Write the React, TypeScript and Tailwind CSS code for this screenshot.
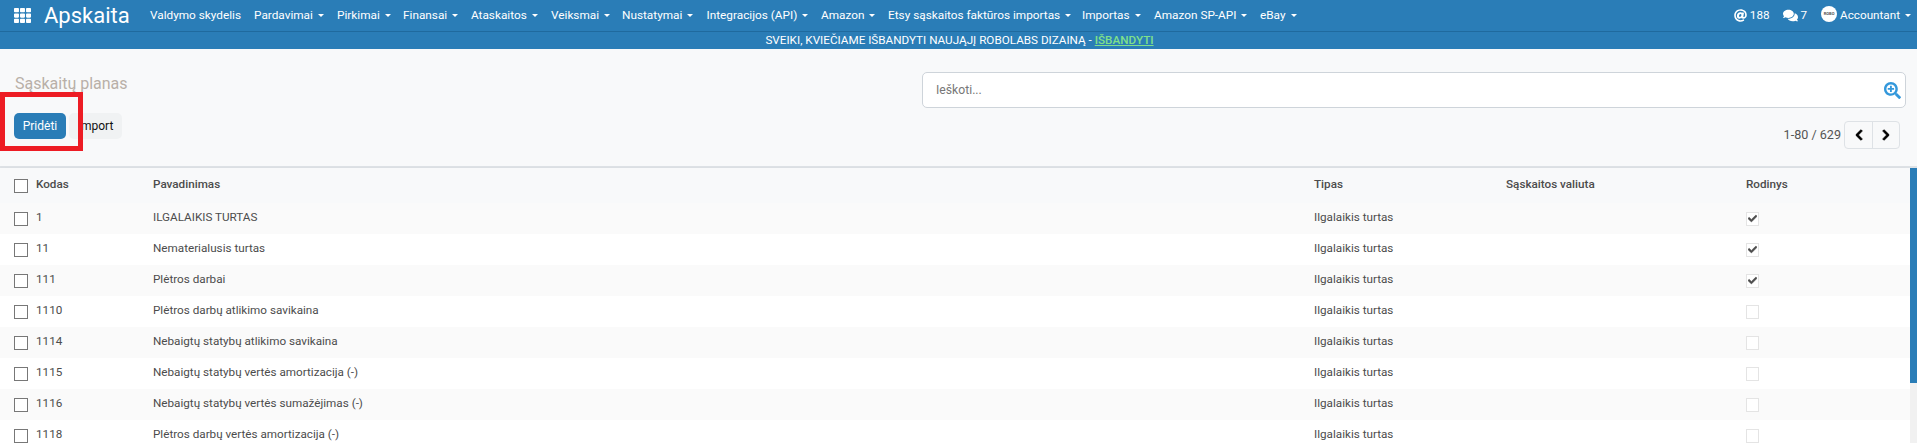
import { FaAt, FaCheck, FaChevronLeft, FaChevronRight, FaComments, FaSearchPlus, FaTh } from "react-icons/fa";

const NAV = [
  { label: "Valdymo skydelis", width: "w-[104px]", caret: false },
  { label: "Pardavimai", width: "w-[83px]", caret: true },
  { label: "Pirkimai", width: "w-[66px]", caret: true },
  { label: "Finansai", width: "w-[68px]", caret: true },
  { label: "Ataskaitos", width: "w-[80px]", caret: true },
  { label: "Veiksmai", width: "w-[71px]", caret: true },
  { label: "Nustatymai", width: "w-[84.5px]", caret: true },
  { label: "Integracijos (API)", width: "w-[114.5px]", caret: true },
  { label: "Amazon", width: "w-[67px]", caret: true },
  { label: "Etsy sąskaitos faktūros importas", width: "w-[194px]", caret: true },
  { label: "Importas", width: "w-[72px]", caret: true },
  { label: "Amazon SP-API", width: "w-[106px]", caret: true },
  { label: "eBay", width: "w-[40px]", caret: true },
];

const ROWS = [
  { code: "1", name: "ILGALAIKIS TURTAS", shown: true },
  { code: "11", name: "Nematerialusis turtas", shown: true },
  { code: "111", name: "Plėtros darbai", shown: true },
  { code: "1110", name: "Plėtros darbų atlikimo savikaina", shown: false },
  { code: "1114", name: "Nebaigtų statybų atlikimo savikaina", shown: false },
  { code: "1115", name: "Nebaigtų statybų vertės amortizacija (-)", shown: false },
  { code: "1116", name: "Nebaigtų statybų vertės sumažėjimas (-)", shown: false },
  { code: "1118", name: "Plėtros darbų vertės amortizacija (-)", shown: false },
];

function Caret() {
  return <span className="ml-[5px] inline-block border-x-[3px] border-t-[3px] border-x-transparent border-t-white align-middle" />;
}

function RowCheck() {
  return <span className="block w-[14px] h-[14px] border border-[#777] bg-white" />;
}

export default function App() {
  return (
    <div className="relative h-[443px] overflow-hidden bg-[#f8f9fa] text-[11.7px] text-[#4c4c4c] font-['Roboto',sans-serif]">
      <nav className="flex items-center h-[32px] bg-[#2a7db7] border-b border-[#1f6a9e] text-white">
        <FaTh className="ml-[14px] w-[17px] h-[17px]" />
        <span className="ml-[13px] w-[106px] text-[22px] leading-[30px]">Apskaita</span>
        <ul className="flex items-center text-[11.8px]">
          {NAV.map((item) => (
            <li key={item.label} className={`${item.width} whitespace-nowrap`}>
              {item.label}
              {item.caret && <Caret />}
            </li>
          ))}
        </ul>
        <div className="ml-auto flex items-center pr-[6px] text-[11.7px]">
          <FaAt className="w-[13px] h-[13px]" />
          <span className="ml-[3px]">188</span>
          <FaComments className="ml-[13px] w-[15px] h-[15px]" />
          <span className="ml-[3px]">7</span>
          <span className="ml-[14px] mb-[3px] flex items-center justify-center w-[16px] h-[16px] rounded-full bg-white text-[#555] text-[4px] font-bold overflow-hidden">
            ROBO
          </span>
          <span className="ml-[3px]">Accountant</span>
          <Caret />
        </div>
      </nav>
      <div className="flex items-center justify-center h-[17px] pl-[2px] bg-[#2a7db7] text-white text-[11.7px]">
        SVEIKI, KVIEČIAME IŠBANDYTI NAUJĄJĮ ROBOLABS DIZAINĄ -&nbsp;
        <span className="font-medium text-[#7fe08a] underline">IŠBANDYTI</span>
      </div>

      <div className="flex h-[119px] border-b-2 border-[#dee2e6]">
        <div className="w-[922px] pl-[15px] pt-[24px]">
          <h1 className="text-[16px] leading-[22px] text-[#b8b0a8]">Sąskaitų planas</h1>
          <div className="flex gap-[3px] mt-[18px] -ml-[1px] text-[12px]">
            <button type="button" className="w-[52px] h-[26px] rounded-[5px] bg-[#2a7db7] text-white">
              Pridėti
            </button>
            <button type="button" className="w-[53px] h-[26px] rounded-[5px] bg-[#f0f2f3] text-[#111]">
              Import
            </button>
          </div>
        </div>
        <div className="w-[984px] pt-[23px]">
          <div className="flex items-center h-[36px] rounded-[5px] border border-[#ced4da] bg-white pl-[13px] pr-[4px] text-[#777]">
            <span className="text-[12.2px]">Ieškoti...</span>
            <FaSearchPlus className="ml-auto w-[17px] h-[17px] text-[#3498db]" />
          </div>
          <div className="flex items-center justify-end mt-[13px] mr-[6px]">
            <span className="mr-[3px] text-[12.6px] text-[#555]">1-80 / 629</span>
            <div className="flex h-[28px] rounded-[4px] border border-[#dee2e6] bg-[#f8f9fa] text-black">
              <span className="flex items-center justify-center w-[28px] border-r border-[#dee2e6]">
                <FaChevronLeft className="w-[12px] h-[12px] stroke-current stroke-[40]" />
              </span>
              <span className="flex items-center justify-center w-[26px]">
                <FaChevronRight className="w-[12px] h-[12px] stroke-current stroke-[40]" />
              </span>
            </div>
          </div>
        </div>
      </div>

      <div className="flex">
        <table className="flex-1 table-fixed border-collapse">
          <colgroup>
            <col className="w-[36px]" />
            <col className="w-[117px]" />
            <col className="w-[1161px]" />
            <col className="w-[192px]" />
            <col className="w-[240px]" />
            <col />
          </colgroup>
          <thead>
            <tr className="h-[35px] bg-[#f8f9fa] text-left shadow-[0_2px_5px_rgba(0,0,0,0.07)]">
              <th className="pl-[14px]"><RowCheck /></th>
              <th className="pb-[1px] font-medium">Kodas</th>
              <th className="pb-[1px] font-medium">Pavadinimas</th>
              <th className="pb-[1px] font-medium">Tipas</th>
              <th className="pb-[1px] font-medium">Sąskaitos valiuta</th>
              <th className="pb-[1px] font-medium">Rodinys</th>
            </tr>
          </thead>
          <tbody>
            {ROWS.map((row) => (
              <tr key={row.code} className="h-[31px] odd:bg-[#fafafa] even:bg-white">
                <td className="pl-[14px]"><RowCheck /></td>
                <td className="pb-[1px]">{row.code}</td>
                <td className="pb-[1px]">{row.name}</td>
                <td className="pb-[1px]">Ilgalaikis turtas</td>
                <td />
                <td>
                  <span className="flex items-center justify-center w-[13px] h-[14px] border border-[#e4e4e4] bg-white">
                    {row.shown && <FaCheck className="w-[9px] h-[9px] text-[#4c4c4c] stroke-current stroke-[30]" />}
                  </span>
                </td>
              </tr>
            ))}
          </tbody>
        </table>
        <div className="w-[7px] bg-[#f1f1f1]">
          <div className="h-[215px] bg-[#2a7db7]" />
        </div>
      </div>

      <div className="absolute left-0 top-[92px] w-[83px] h-[59px] border-[5px] border-[#ed1c24]" />
    </div>
  );
}
